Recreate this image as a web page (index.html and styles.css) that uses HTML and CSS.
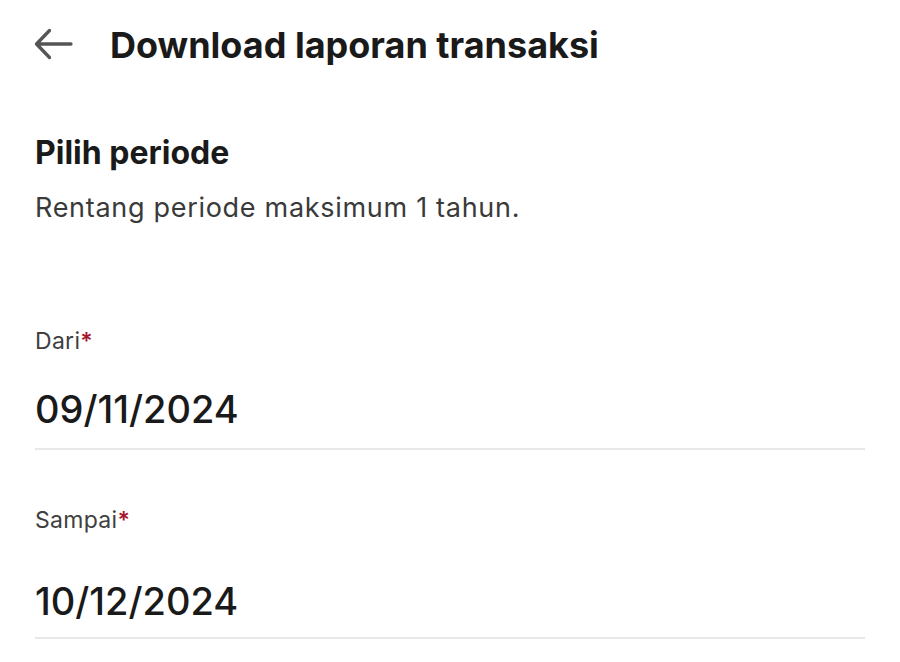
FILE: index.html
```html
<!DOCTYPE html>
<html lang="id">
<head>
    <meta charset="UTF-8">
    <meta name="viewport" content="width=device-width, initial-scale=1.0">
    <title>Download laporan transaksi</title>
    <link rel="stylesheet" href="styles.css">
</head>
<body>
    <div class="header">
        <button class="back" aria-label="Kembali">
            <svg width="40" height="32" viewBox="0 0 40 32">
                <path d="M38 16H3.5M16.5 2.5L3.5 16l13 13.5" fill="none" stroke="#555" stroke-width="3.3" stroke-linecap="round" stroke-linejoin="round"/>
            </svg>
        </button>
        <h1>Download laporan transaksi</h1>
    </div>

    <div class="content">
        <div class="period">
            <h2>Pilih periode</h2>
            <p>Rentang periode maksimum 1 tahun.</p>
        </div>

        <div class="field">
            <label>Dari<span class="req">*</span></label>
            <div class="value">09/11/2024</div>
        </div>

        <div class="field">
            <label>Sampai<span class="req">*</span></label>
            <div class="value">10/12/2024</div>
        </div>
    </div>
</body>
</html>
```

FILE: styles.css
```css
body {
    margin: 0;
    background: #fff;
    font-family: Inter, "Liberation Sans", sans-serif;
    color: #1a1a1a;
}
.header {
    display: flex;
    align-items: center;
    padding: 23px 0 0 33px;
    height: 44px;
}
.back {
    border: none;
    background: none;
    padding: 0;
    width: 40px;
    height: 32px;
    margin-right: 37px;
    margin-top: -2px;
}
h1 {
    margin: 0;
    font-size: 36px;
    line-height: 44px;
    font-weight: 700;
}
.content {
    padding: 0 35px;
}
.period h2 {
    margin: 66px 0 0;
    font-size: 32px;
    font-weight: 700;
    line-height: 40px;
}
.period p {
    margin: 18px 0 0;
    font-size: 27px;
    line-height: 34px;
    letter-spacing: 0.7px;
    color: #3a3a3a;
}
.field {
    width: 830px;
    border-bottom: 2px solid #e8e8e8;
    padding-bottom: 16px;
}
.period + .field {
    margin-top: 102px;
}
.field + .field {
    margin-top: 56px;
    padding-bottom: 13px;
}
label {
    display: block;
    font-size: 23px;
    line-height: 28px;
    letter-spacing: 0.3px;
    color: #404040;
}
.req {
    color: #a6182c;
    font-weight: 600;
}
.value {
    margin-top: 31px;
    font-size: 38px;
    line-height: 46px;
    font-weight: 500;
}
.field + .field .value {
    margin-top: 44px;
}
```
